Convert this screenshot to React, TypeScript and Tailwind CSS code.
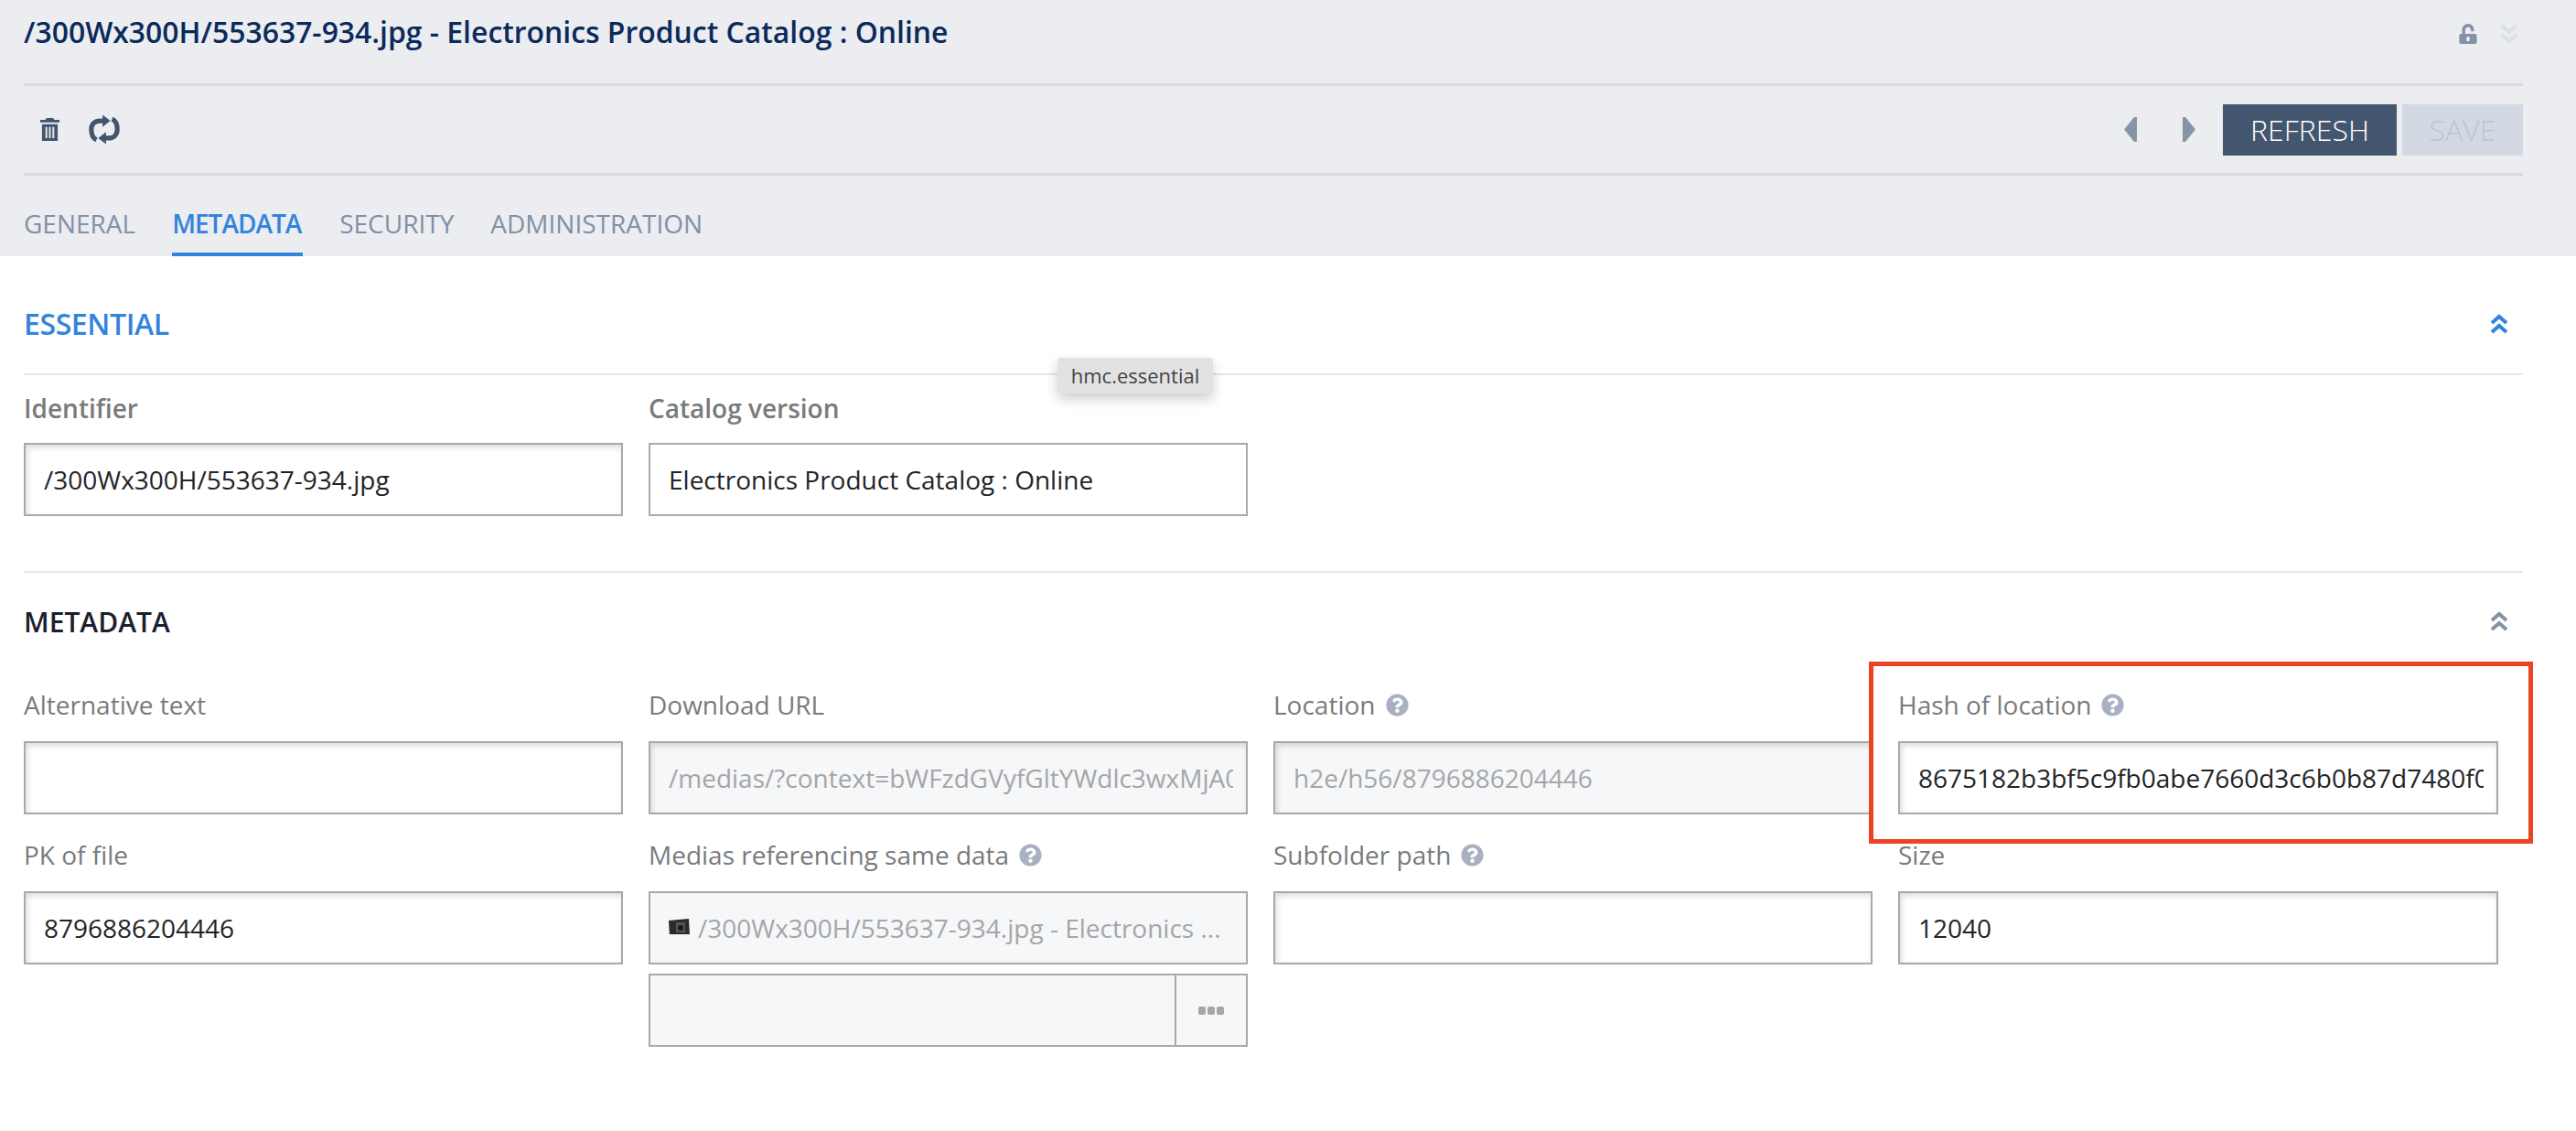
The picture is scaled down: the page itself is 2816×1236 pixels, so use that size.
import type { ReactNode } from "react";
import { FaQuestionCircle, FaUnlockAlt } from "react-icons/fa";

const font = "font-['Open_Sans','Noto_Sans',sans-serif]";

function Trash() {
  return (
    <svg width="21" height="25" viewBox="0 0 22 26" fill="#44546c">
      <path d="M7 0h8l1 2h6v3H0V2h6z" />
      <path d="M2 7h18v19H2zm4 3v13h2V10zm4 0v13h2V10zm4 0v13h2V10z" fillRule="evenodd" />
    </svg>
  );
}

function Cycle() {
  return (
    <svg width="34" height="33" viewBox="0 0 36 34" fill="none" stroke="#44546c" strokeWidth="5.500">
      <path d="M9 29C4 27 3 23 3 17c0-6 4-10 10-10h4" />
      <path d="M27 5c5 2 6 6 6 12 0 6-4 10-10 10h-4" />
      <path d="M16 0l9 7-9 7z" fill="#44546c" stroke="none" />
      <path d="M20 20l-9 7 9 7z" fill="#44546c" stroke="none" />
    </svg>
  );
}

function DoubleChevron({ up, color, size = 20 }: { up?: boolean; color: string; size?: number }) {
  return (
    <svg width={size} height={size + 2} viewBox="0 0 20 22" fill="none" stroke={color} strokeWidth="4">
      {up ? (
        <>
          <path d="M2 10l8-7 8 7" />
          <path d="M2 20l8-7 8 7" />
        </>
      ) : (
        <>
          <path d="M2 2l8 7 8-7" />
          <path d="M2 12l8 7 8-7" />
        </>
      )}
    </svg>
  );
}

function Caret({ right }: { right?: boolean }) {
  return (
    <svg width="15" height="29" viewBox="0 0 15 29" fill="#8695a5">
      <path d={right ? "M1 1h3l11 13.500L4 28H1z" : "M14 1h-3L0 14.500 11 28h3z"} />
    </svg>
  );
}

function Thumb() {
  return (
    <svg width="23" height="20" viewBox="0 0 23 20" className="shrink-0">
      <path d="M0 2l22-2 1 18-22 2z" fill="#2b2b2b" />
      <rect x="8" y="4" width="10" height="11" fill="#555" />
      <circle cx="13" cy="10" r="3" fill="#1a1a1a" />
      <rect x="0" y="17" width="23" height="3" fill="#f3f3f3" />
    </svg>
  );
}

function Label({ children, help, strong }: { children: ReactNode; help?: boolean; strong?: boolean }) {
  return (
    <div
      className={`h-[50px] flex items-start gap-[11px] text-[28px] text-[#777b7e] ${
        strong ? "font-semibold leading-[24px]" : "leading-[21px]"
      }`}
    >
      <span>{children}</span>
      {help && <FaQuestionCircle size={25} className="text-[#a9b0c2] -mt-[2px]" />}
    </div>
  );
}

function Box({ children, disabled, flat }: { children?: ReactNode; disabled?: boolean; flat?: boolean }) {
  return (
    <div
      className={`h-[80px] border-2 border-[#a9a9a9] pl-[20px] pr-[14px] flex items-center text-[28px] ${
        disabled ? "bg-[#f6f7f9] text-[#a4a6a8]" : "bg-white text-[#222426]"
      } ${flat ? "" : "shadow-[inset_2px_3px_6px_rgba(0,0,0,0.14)]"}`}
    >
      <div className="overflow-hidden whitespace-nowrap w-full flex items-center gap-[9px]">{children}</div>
    </div>
  );
}

function Field({
  label,
  help,
  children,
  disabled,
  flat,
  strong,
}: {
  label: string;
  help?: boolean;
  children?: ReactNode;
  disabled?: boolean;
  flat?: boolean;
  strong?: boolean;
}) {
  return (
    <div>
      <Label help={help} strong={strong}>
        {label}
      </Label>
      <Box disabled={disabled} flat={flat}>
        {children}
      </Box>
    </div>
  );
}

const grid = "grid grid-cols-[655px_655px_655px_656px] gap-x-[28px] gap-y-[34px]";

export default function App() {
  return (
    <div className={`${font} relative h-[1236px] w-[2816px] overflow-hidden bg-white`}>
      {/* Header */}
      <header className="h-[280px] bg-[#ebedf1] pl-[26px] pr-[58px]">
        <div className="h-[94px] border-b-[3px] border-[#d9dbe0] flex items-start justify-between">
          <h1 className="text-[31.900px] leading-[40px] mt-[15px] font-semibold text-[#0b2a5b]">
            /300Wx300H/553637-934.jpg - Electronics Product Catalog : Online
          </h1>
          <div className="flex items-center gap-[24px] mt-[26px] mr-[5px]">
            <FaUnlockAlt size={22} className="text-[#8492a8]" />
            <DoubleChevron color="#dcdfe6" />
          </div>
        </div>
        <div className="h-[98px] border-b-[3px] border-[#d9dbe0] flex items-center justify-between">
          <div className="flex items-center gap-[32px] pl-[18px]">
            <Trash />
            <Cycle />
          </div>
          <div className="flex items-center">
            <Caret />
            <div className="w-[48px]" />
            <Caret right />
            <div className="w-[30px]" />
            <button className="h-[56px] w-[190px] bg-[#44566f] text-white text-[32px] font-light">REFRESH</button>
            <button className="h-[56px] w-[132px] ml-[6px] bg-[#d3d9e3] text-[#bcc3d0] text-[32px] font-light">
              SAVE
            </button>
          </div>
        </div>
        <nav className="h-[88px] flex items-end gap-[40px] text-[28px] text-[#8190a5]">
          <a className="h-[61px] pt-[4px]">GENERAL</a>
          <a className="h-[61px] w-[143px] pt-[4px] border-b-[4px] border-[#3384dc] text-[#3384dc] font-semibold tracking-[-1px] whitespace-nowrap">
            METADATA
          </a>
          <a className="h-[61px] pt-[4px]">SECURITY</a>
          <a className="h-[61px] pt-[4px]">ADMINISTRATION</a>
        </nav>
      </header>

      {/* Essential */}
      <section className="pl-[26px] pr-[58px]">
        <div className="h-[130px] pt-[20px] border-b-[2px] border-[#e5e8ec] flex items-center justify-between">
          <h2 className="text-[32px] font-semibold tracking-[-0.4px] text-[#3384dc]">ESSENTIAL</h2>
          <div className="mr-[16px]">
            <DoubleChevron up color="#3384dc" />
          </div>
        </div>
        <div className={`${grid} mt-[24px]`}>
          <Field label="Identifier" strong>
            /300Wx300H/553637-934.jpg
          </Field>
          <Field label="Catalog version" flat strong>
            Electronics Product Catalog : Online
          </Field>
        </div>
      </section>

      {/* Metadata */}
      <section className="pl-[26px] pr-[58px] mt-[60px]">
        <div className="h-[108px] border-t-[2px] border-[#e5e8ec] flex items-center justify-between">
          <h2 className="text-[30px] font-semibold text-[#1a202c]">METADATA</h2>
          <div className="mr-[16px]">
            <DoubleChevron up color="#8492a8" />
          </div>
        </div>
        <div className={`${grid} mt-[28px]`}>
          <Field label="Alternative text" />
          <Field label="Download URL" disabled>
            /medias/?context=bWFzdGVyfGltYWdlc3wxMjA0
          </Field>
          <Field label="Location" help disabled>
            h2e/h56/8796886204446
          </Field>
          <Field label="Hash of location" help>
            8675182b3bf5c9fb0abe7660d3c6b0b87d7480f0
          </Field>
          <Field label="PK of file">8796886204446</Field>
          <div>
            <Label help>Medias referencing same data</Label>
            <Box disabled flat>
              <Thumb />
              <span>/300Wx300H/553637-934.jpg - Electronics ...</span>
            </Box>
            <div className="mt-[10px] h-[80px] border-2 border-[#a9a9a9] bg-[#f6f7f9] flex justify-end">
              <div className="w-[78px] border-l-2 border-[#a9a9a9] flex items-center justify-center gap-[2px]">
                <span className="w-[8px] h-[9px] rounded-[2px] bg-[#a4a6a8]" />
                <span className="w-[8px] h-[9px] rounded-[2px] bg-[#a4a6a8]" />
                <span className="w-[8px] h-[9px] rounded-[2px] bg-[#a4a6a8]" />
              </div>
            </div>
          </div>
          <Field label="Subfolder path" help />
          <Field label="Size">12040</Field>
        </div>
      </section>

      {/* Tooltip */}
      <div className="absolute left-[1156px] top-[391px] h-[39px] w-[170px] rounded-[3px] bg-[#e2e2e2] shadow-[0_6px_14px_rgba(0,0,0,0.2)] flex items-center justify-center text-[22px] text-[#444]">
        hmc.essential
      </div>

      {/* Red annotation */}
      <div className="absolute left-[2043px] top-[723px] h-[199px] w-[726px] border-[5px] border-[#ee4225]" />
    </div>
  );
}
